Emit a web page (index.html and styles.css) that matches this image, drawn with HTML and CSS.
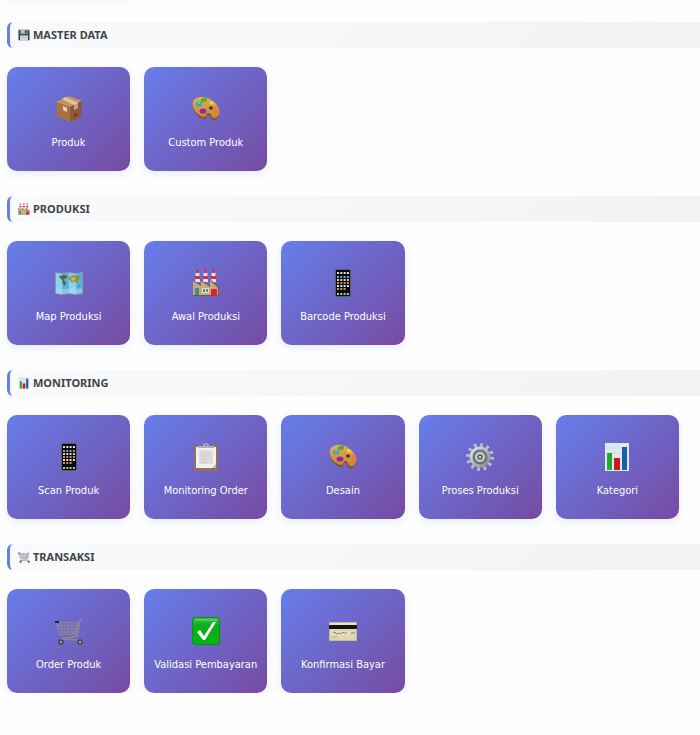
FILE: index.html
```html
<!DOCTYPE html>
<html lang="id">
<head>
  <meta charset="UTF-8">
  <meta name="viewport" content="width=device-width, initial-scale=1.0">
  <title>Menu</title>
  <link rel="stylesheet" href="styles.css">
</head>
<body>
  <!-- Icons shared by the cards and section titles -->
  <svg class="icon-defs" aria-hidden="true">
    <defs>
      <linearGradient id="silver" x1="0" y1="0" x2="1" y2="1">
        <stop offset="0" stop-color="#e1e4e7"/><stop offset="1" stop-color="#858c92"/>
      </linearGradient>
      <linearGradient id="wood" x1="0" y1="0" x2="0" y2="1">
        <stop offset="0" stop-color="#e2ad5d"/><stop offset="1" stop-color="#c88436"/>
      </linearGradient>
      <linearGradient id="green" x1="0" y1="0" x2="0" y2="1">
        <stop offset="0" stop-color="#36c546"/><stop offset="0.3" stop-color="#08ad16"/><stop offset="1" stop-color="#05b513"/>
      </linearGradient>
    </defs>
    <symbol id="floppy" viewBox="0 0 28 28">
      <path d="M1 2h24l2 2v22H1z" fill="#3d4a50"/>
      <path d="M6 2h16v9H6z" fill="#b8c6cc"/>
      <path d="M16 3h4v7h-4z" fill="#35454d"/>
      <path d="M5 14h18v12H5z" fill="#dce6e7"/>
      <path d="M5 14h18v3H5z" fill="#75a8ae"/>
      <path d="M8 20h12M8 23h12" stroke="#9ba9ae"/>
    </symbol>
    <symbol id="box" viewBox="0 0 28 28">
      <path d="M1 7L14 1l13 5-12 6z" fill="#c9935c"/>
      <path d="M1 7l14 5v15L2 21z" fill="#a9713f"/>
      <path d="M15 12l12-6-1 16-11 5z" fill="#8d5833"/>
      <path d="M7 4l3-2 13 6v5l-4 2v-5z" fill="#e2c6a2"/>
      <path d="M19 10l4-2v5l-4 2z" fill="#bfa184"/>
      <path d="M8 11l4 2v4l-4-2z" fill="#e2d5c7"/>
      <path d="M19 20l2-2 1 2-2 2z" fill="#543323"/>
    </symbol>
    <symbol id="palette" viewBox="0 0 28 28">
      <path d="M1 8C2 3 9 1 16 4c8 3 13 11 11 16-1 4-5 6-7 5-2-2-1-5-4-5-2 0-1 4-4 4C6 23-1 15 1 8z" fill="#855128"/>
      <path d="M1 7C2 2 9 1 16 3c8 4 13 11 11 16-1 4-5 5-6 4-2-2-2-5-5-5-2 0-1 4-4 4C6 21-1 14 1 7z" fill="url(#wood)"/>
      <ellipse cx="12" cy="5" rx="3.2" ry="2" transform="rotate(-18 12 5)" fill="#45b51f"/>
      <ellipse cx="7" cy="9" rx="3.2" ry="2.5" fill="#36a9a7"/>
      <circle cx="7" cy="8" r="1" fill="#6ddbd1"/>
      <ellipse cx="11" cy="16" rx="3.4" ry="2.6" fill="#91299d"/>
      <ellipse cx="20" cy="8" rx="2.4" ry="1.8" fill="#f1d52d"/>
      <ellipse cx="24" cy="15" rx="1.8" ry="3.2" transform="rotate(-30 24 15)" fill="#ed744b"/>
      <ellipse cx="19" cy="13" rx="2.1" ry="1.7" fill="#493727"/>
    </symbol>
    <symbol id="map" viewBox="0 0 28 28">
      <path d="M0 3l7 1 7-1 7 1 7-1v22l-7 1-7-1-7 1-7-1z" fill="#8f9aa0"/>
      <path d="M1 4l6 1 7-1 7 1 6-1v20l-6 1-7-1-7 1-6-1z" fill="#59b5df"/>
      <path d="M1 4l6 1v20l-6-1zM14 4l7 1v20l-7-1z" fill="#8fd1ec"/>
      <path d="M1 19c8 2 18-1 26 1v4l-6 1-7-1-7 1-6-1z" fill="#b1dee9" opacity=".5"/>
      <path d="M4 7l5-1 4 1-3 3-2 1 3 2-1 4-2-2-1-4-2-2z" fill="#55682b"/>
      <path d="M14 9l3-3 7 1 2 2-3 2-1 3-3-2-2 2-2-3-2-1z" fill="#8a953a"/>
      <path d="M16 9l3-1 2 2-3 2-2-1z" fill="#d5bb4e"/>
      <path d="M23 16l3 1-1 1-2-1z" fill="#728641"/>
    </symbol>
    <symbol id="factory" viewBox="0 0 28 28">
      <path d="M4 1h3l1 12H3zM12 1h3l1 12h-5zM20 1h3l1 12h-5z" fill="#eee7e8"/>
      <path d="M4 1h3v3H4zM12 1h3v3h-3zM20 1h3v3h-3zM3 7h5v3H3zM11 7h5v3h-5zM19 7h5v3h-5z" fill="#ce304c"/>
      <path d="M1 11l8 5v-5l9 6v-7l9 8v9H1z" fill="#705e4b"/>
      <path d="M1 12l8 5v-5l9 6v-7l8 8v7H1z" fill="#c5aa7c"/>
      <path d="M3 19h4v7H3z" fill="#468b93"/>
      <path d="M10 19h7v5h-7z" fill="#e2e0ba"/>
      <path d="M11 20h2v3h-2zM14 20h2v3h-2z" fill="#508ba1"/>
      <path d="M19 20h6v7h-6z" fill="#d5232f"/>
    </symbol>
    <symbol id="phone" viewBox="0 0 28 28">
      <rect x="6" y="0" width="16" height="28" rx="2" fill="#5b5b62"/>
      <rect x="7" y="1" width="14" height="26" rx="1" fill="#07090c"/>
      <g fill="none" stroke-width="2" stroke-dasharray="2 1.3">
        <path d="M8 4h12" stroke="#dce5e5"/>
        <path d="M8 8h12" stroke="#83a6b6"/>
        <path d="M8 11h12" stroke="#d8d6bf"/>
        <path d="M8 14h12" stroke="#ce8652"/>
        <path d="M8 17h12" stroke="#e5e6dd"/>
        <path d="M8 20h9" stroke="#d49352"/>
        <path d="M8 25h12" stroke="#87d8bd"/>
      </g>
    </symbol>
    <symbol id="chart" viewBox="0 0 28 28">
      <path d="M2 0h24v28H2z" fill="#dfe9f5"/>
      <path d="M2 5h24M2 10h24M2 15h24M2 20h24" stroke="#d0dcec"/>
      <path d="M4 10h5v17H4z" fill="#20ad25"/>
      <path d="M11 15h6v12h-6z" fill="#c51a1e"/>
      <path d="M19 4h5v23h-5z" fill="#1760aa"/>
    </symbol>
    <symbol id="clipboard" viewBox="0 0 28 28">
      <rect x="2" y="2" width="24" height="26" rx="1" fill="#96705a"/>
      <path d="M4 4h20v21H4z" fill="#f2f1ed"/>
      <path d="M7 7h14v14H7z" fill="#deddd9"/>
      <path d="M9 10h10M9 13h10M9 16h10M9 19h7" stroke="#cccdce"/>
      <path d="M20 25l4-4v4z" fill="#c7b4a5"/>
      <path d="M6 5V3h5c0-4 6-4 6 0h5v2z" fill="#aab1c1"/>
      <circle cx="14" cy="2" r="1" fill="#70799a"/>
    </symbol>
    <symbol id="gear" viewBox="0 0 28 28">
      <circle cx="14" cy="14" r="12" fill="none" stroke="#bac1c7" stroke-width="4" stroke-dasharray="2.6 3.68"/>
      <circle cx="14" cy="14" r="9" fill="#686f73" stroke="url(#silver)" stroke-width="3"/>
      <circle cx="14" cy="14" r="6" fill="#858b8d"/>
      <circle cx="14" cy="14" r="3.7" fill="#4b555e" stroke="#d1d7da" stroke-width="2"/>
      <circle cx="14" cy="14" r="1.2" fill="#d8dcdf"/>
    </symbol>
    <symbol id="cart" viewBox="0 0 28 28">
      <g fill="none" stroke="#8d8994" stroke-linejoin="round">
        <path d="M27 1l-2 2-3 16-16 3" stroke-width="1.5"/>
        <path d="M1 5l22 1-2 11-16 1zM2 8l21 1M3 11l19 1M4 15l18 0M5 5l3 13M9 5l2 13M13 6l1 12M17 6l0 11M21 6l-2 11"/>
        <path d="M6 22l17 1 3 2" stroke-width="1.5"/>
      </g>
      <path d="M0 4h4v2H0z" fill="#24262e"/>
      <circle cx="6" cy="25" r="2" fill="#aaa9b1" stroke="#403e46" stroke-width="1.5"/>
      <circle cx="25" cy="25" r="2" fill="#aaa9b1" stroke="#403e46" stroke-width="1.5"/>
    </symbol>
    <symbol id="check" viewBox="0 0 28 28">
      <rect width="28" height="28" rx="4" fill="#088f19"/>
      <rect x="1" y="1" width="26" height="26" rx="3" fill="url(#green)"/>
      <path d="M3 3h22" stroke="#72d875" stroke-linecap="round"/>
      <path d="M5 15l3-2 4 6L21 5h3L13 23h-2z" fill="#fff"/>
    </symbol>
    <symbol id="card" viewBox="0 0 28 28">
      <rect y="5" width="28" height="19" rx="1" fill="#c5bd94"/>
      <path d="M1 6h26v3H1z" fill="#e7e1c5"/>
      <path d="M0 8h28v4H0z" fill="#16140f"/>
      <path d="M1 12h26v11H1z" fill="#ded7b1"/>
      <path d="M3 14h18v4H3z" fill="#e6e1c9"/>
      <path d="M4 16l2-1 1 2 3-1 2 1 2-2 1 1 3 0M22 16h4" fill="none" stroke="#7d8792"/>
      <path d="M3 20h5" stroke="#b9b185"/>
    </symbol>
  </svg>

  <main class="menu">
    <div class="card-grid previous-row">
      <div class="menu-card"></div>
    </div>

    <section>
      <h2 class="section-title"><svg><use href="#floppy"/></svg>MASTER DATA</h2>
      <div class="card-grid">
        <a class="menu-card" href="#produk"><svg><use href="#box"/></svg><span>Produk</span></a>
        <a class="menu-card" href="#custom-produk"><svg><use href="#palette"/></svg><span>Custom Produk</span></a>
      </div>
    </section>

    <section>
      <h2 class="section-title"><svg><use href="#factory"/></svg>PRODUKSI</h2>
      <div class="card-grid">
        <a class="menu-card" href="#map-produksi"><svg><use href="#map"/></svg><span>Map Produksi</span></a>
        <a class="menu-card" href="#awal-produksi"><svg><use href="#factory"/></svg><span>Awal Produksi</span></a>
        <a class="menu-card" href="#barcode-produksi"><svg><use href="#phone"/></svg><span>Barcode Produksi</span></a>
      </div>
    </section>

    <section>
      <h2 class="section-title"><svg><use href="#chart"/></svg>MONITORING</h2>
      <div class="card-grid">
        <a class="menu-card" href="#scan-produk"><svg><use href="#phone"/></svg><span>Scan Produk</span></a>
        <a class="menu-card" href="#monitoring-order"><svg><use href="#clipboard"/></svg><span>Monitoring Order</span></a>
        <a class="menu-card" href="#desain"><svg><use href="#palette"/></svg><span>Desain</span></a>
        <a class="menu-card" href="#proses-produksi"><svg><use href="#gear"/></svg><span>Proses Produksi</span></a>
        <a class="menu-card" href="#kategori"><svg><use href="#chart"/></svg><span>Kategori</span></a>
      </div>
    </section>

    <section>
      <h2 class="section-title"><svg><use href="#cart"/></svg>TRANSAKSI</h2>
      <div class="card-grid">
        <a class="menu-card" href="#order-produk"><svg><use href="#cart"/></svg><span>Order Produk</span></a>
        <a class="menu-card" href="#validasi-pembayaran"><svg><use href="#check"/></svg><span>Validasi Pembayaran</span></a>
        <a class="menu-card" href="#konfirmasi-bayar"><svg><use href="#card"/></svg><span>Konfirmasi Bayar</span></a>
      </div>
    </section>
  </main>
</body>
</html>
```
FILE: styles.css
```css
* { box-sizing: border-box; }
body {
  margin: 0;
  background: #fefefe;
  font-family: Tahoma, "Noto Sans", sans-serif;
}
.icon-defs {
  position: absolute;
  width: 0;
  height: 0;
}
.menu {
  display: flex;
  flex-direction: column;
  gap: 25px;
  padding-left: 7px;
}
/* the row above is scrolled out, only its shadow shows */
.previous-row { margin-top: -107px; }
.section-title {
  display: flex;
  align-items: center;
  gap: 3px;
  margin: 0 0 19px;
  padding: 4px 8px;
  border-left: 3px solid #667eea;
  border-radius: 6px 0 0 6px;
  background: linear-gradient(135deg, #f8fafb, #f1f3f5);
  color: #3f444a;
  font-size: 11px;
  font-weight: 700;
  line-height: 18px;
}
.section-title svg {
  width: 12px;
  height: 12px;
}
.card-grid {
  display: grid;
  grid-template-columns: repeat(auto-fill, minmax(120px, 1fr));
  gap: 14px;
  padding-right: 21px;
}
.menu-card {
  display: flex;
  flex-direction: column;
  align-items: center;
  gap: 10px;
  min-height: 104px;
  padding: 28px 4px 18px;
  border-radius: 10px;
  background: linear-gradient(135deg, #667eea 0%, #764ba2 100%);
  box-shadow: 0 3px 10px rgba(102, 126, 234, 0.14);
  color: #fff;
  font-family: Tahoma, "DejaVu Sans Condensed", "Noto Sans", sans-serif;
  font-size: 11px;
  line-height: 20px;
  text-align: center;
  text-decoration: none;
}
.menu-card svg {
  width: 28px;
  height: 28px;
}
.menu-card:hover { filter: brightness(1.08); }
```
